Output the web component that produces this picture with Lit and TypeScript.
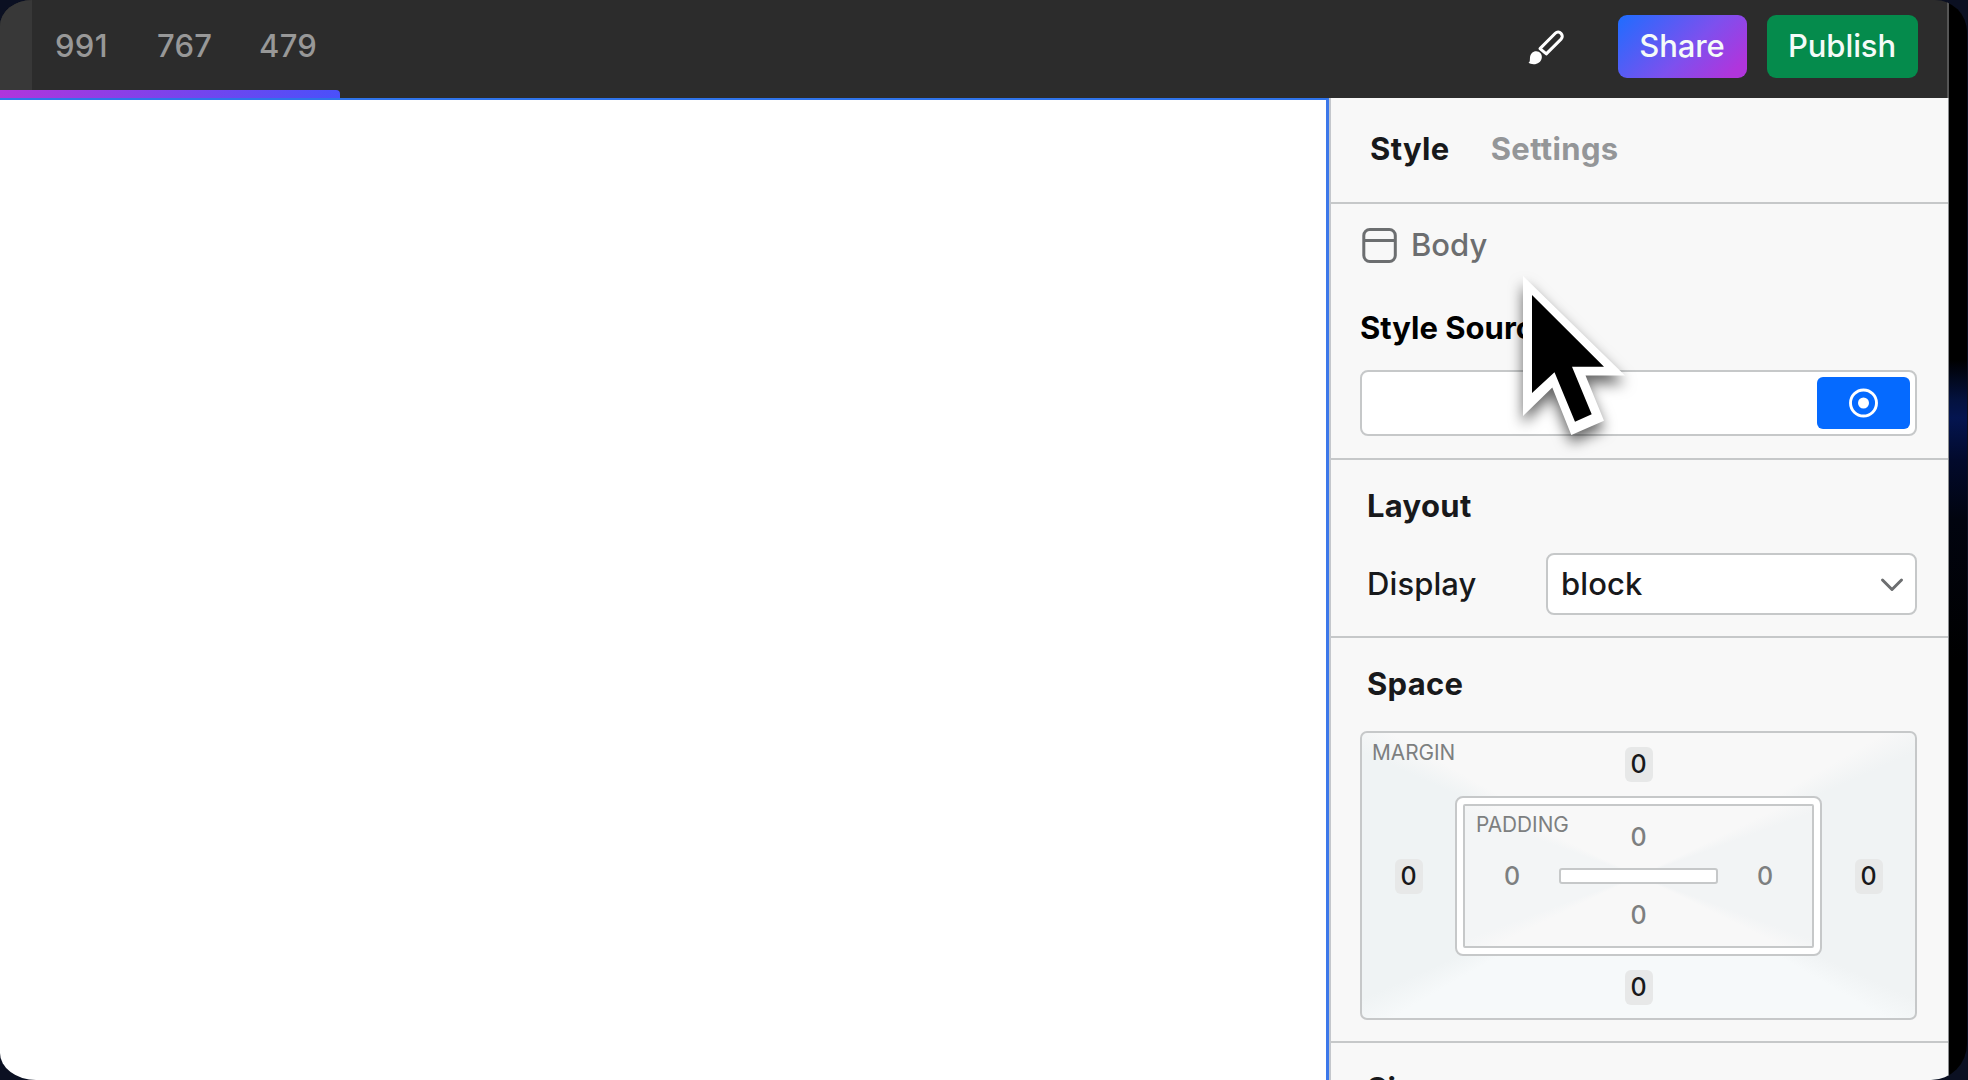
import { LitElement, html, svg, css } from "lit";
import { customElement } from "lit/decorators.js";

const brushIcon = svg`<svg class="brush" viewBox="0 0 40 40" width="40" height="40">
  <path d="M13 22.600 L28.300 7.300 C32 3.600 37.800 9.200 34.100 13.100 L19.300 27.900 Z" fill="none" stroke="#fff" stroke-width="3" stroke-linejoin="round"/>
  <path d="M9.200 25.300 C13 25.300 15.300 28.300 14.800 31.700 C14.200 36 10.500 38.300 6.500 38.200 C4.500 38.200 2.500 37.700 1.500 36.800 C3.300 35.800 2.700 34 3 31.500 C3.300 28 5.800 25.300 9.200 25.300Z" fill="#fff"/>
</svg>`;

@customElement("top-bar")
export class TopBar extends LitElement {
  static styles = css`
    :host { display: flex; height: 98px; box-sizing: border-box; background: #2c2c2c; border-right: 2px solid #555; color: #989898; position: relative; }
    .lead { width: 32px; background: #383838; }
    .sizes { display: flex; padding: 0 0 6px 23px; gap: 47px; align-items: center; font-weight: 500; letter-spacing: .3px; }
    .size { width: 55px; white-space: nowrap; }
    .fill { flex: 1; }
    .actions { display: flex; align-items: center; padding: 0 29px 6px 0; font-weight: 500; }
    .brush { display: block; margin-right: 51px; overflow: visible; }
    .btn { height: 63px; line-height: 61px; box-sizing: border-box; border-radius: 9px; color: #f4fbf8; text-align: center; letter-spacing: -.1px; }
    .share { width: 129px; background: linear-gradient(135deg, #1e6dff, #7d50ee 55%, #b035dc 90%); margin-right: 20px; text-indent: -1px; }
    .publish { width: 151px; background: #058b4c; text-indent: -1px; }
    .progress { position: absolute; left: 0; bottom: 0; width: 340px; height: 8px; border-radius: 0 4px 0 0; background: linear-gradient(90deg, #b035dc, #4a50fa); }
  `;
  render() {
    return html`
      <div class="lead"></div>
      <div class="sizes">${["991", "767", "479"].map((s) => html`<span class="size">${s}</span>`)}</div>
      <div class="fill"></div>
      <div class="actions">
        ${brushIcon}
        <div class="btn share">Share</div>
        <div class="btn publish">Publish</div>
      </div>
      <div class="progress"></div>`;
  }
}

@customElement("space-editor")
export class SpaceEditor extends LitElement {
  static styles = css`
    :host { display: block; width: 557px; height: 289px; font-size: 25px; }
    .box { box-sizing: border-box; border: 2px solid #c6c8c9; display: grid; height: 100%; position: relative; align-items: center; justify-items: center; }
    .margin { border-radius: 7px; grid-template: 63px 160px 1fr / 93px 367px 1fr; background: conic-gradient(from 0deg at 50% 50%, #f8f8f8 0 60deg, #f0f3f4 66deg 114deg, #f6f9fa 120deg 240deg, #eff3f4 246deg 294deg, #f8f8f8 300deg); }
    .frame { width: 367px; height: 160px; box-sizing: border-box; border: 2px solid #c6c8c9; border-radius: 8px; background: #fff; padding: 6px; }
    .padding { border-radius: 2px; grid-template: 62px 16px 1fr / 94px 159px 1fr; background: conic-gradient(from 0deg at 50% 50%, #f8f8f8 0 64deg, #f2f4f5 70deg 110deg, #f8f8f8 116deg 244deg, #f3f5f6 250deg 290deg, #f8f8f8 296deg); color: #7d7f80; font-weight: 500; }
    .label { position: absolute; font-size: 20.800px; line-height: 24px; font-weight: 400; color: #7d7f80; white-space: nowrap; }
    .margin > .label { left: 10px; top: 8px; }
    .padding > .label { left: 11px; top: 7px; }
    .chip { width: 28px; height: 35px; line-height: 35px; border-radius: 6px; background: #e7e8e8; color: #18191b; font-weight: 500; text-align: center; }
    .t { grid-area: 1 / 2; } .l { grid-area: 2 / 1; } .m { grid-area: 2 / 2; } .r { grid-area: 2 / 3; } .b { grid-area: 3 / 2; }
    .core { width: 159px; height: 16px; box-sizing: border-box; border: 2px solid #c6c8c9; border-radius: 3px; background: #fff; }
  `;
  render() {
    return html`<div class="box margin">
      <span class="label">MARGIN</span>
      <span class="chip t">0</span><span class="chip l">0</span>
      <div class="frame m"><div class="box padding">
        <span class="label">PADDING</span>
        <span class="t">0</span><span class="l">0</span><div class="core m"></div><span class="r">0</span><span class="b">0</span>
      </div></div>
      <span class="chip r">0</span><span class="chip b">0</span>
    </div>`;
  }
}

@customElement("style-panel")
export class StylePanel extends LitElement {
  static styles = css`
    :host { display: flex; flex-direction: column; box-sizing: border-box; width: 618px; background: #f8f8f8; color: #18191b; overflow: hidden; border-right: 1px solid #8c8e90; font-weight: 450; }
    section { box-sizing: border-box; border-bottom: 2px solid #c6c8c9; padding: 0 31px 0 29px; flex: none; }
    .tabs { height: 106px; display: flex; gap: 41px; align-items: center; font-weight: 700; padding: 0 0 2px 39px; letter-spacing: .35px; }
    .off { color: #949698; }
    .source { height: 256px; }
    .node { display: flex; align-items: center; gap: 14px; height: 83px; color: #6c6e70; padding-left: 2px; }
    .node span { margin-top: -2px; }
    .srctitle { font-weight: 700; color: #000; height: 83px; line-height: 81px; }
    .field { box-sizing: border-box; border: 2px solid #c6c8c9; border-radius: 8px; background: #fff; display: flex; align-items: center; }
    .input { height: 66px; justify-content: flex-end; padding-right: 5px; }
    .local { width: 93px; height: 52px; border-radius: 6px; background: #056aff; display: grid; place-items: center; }
    .title { font-weight: 700; padding-left: 7px; line-height: 40px; padding-top: 26px; letter-spacing: .3px; }
    .layout { height: 178px; }
    .row { display: flex; align-items: center; padding-left: 7px; justify-content: space-between; margin-top: 27px; letter-spacing: .1px; }
    .select { width: 371px; height: 62px; padding: 0 11px 0 13px; justify-content: space-between; }
    .space { height: 405px; }
    space-editor { margin-top: 27px; }
    .last { border: 0; }
    svg { display: block; }
  `;
  render() {
    return html`
      <section class="tabs"><span>Style</span><span class="off">Settings</span></section>
      <section class="source">
        <div class="node">
          <svg width="35" height="35" viewBox="0 0 35 35" fill="none" stroke="#6c6e70" stroke-width="3"><rect x="1.800" y="1.500" width="31.500" height="32" rx="6"/><path d="M2 12.500H33"/></svg>
          <span>Body</span>
        </div>
        <div class="srctitle">Style Sources</div>
        <div class="field input"><div class="local">
          <svg width="30" height="30" viewBox="0 0 30 30"><circle cx="14.500" cy="15" r="13" fill="none" stroke="#fff" stroke-width="2.900"/><circle cx="14.500" cy="15" r="5.500" fill="#fff"/></svg>
        </div></div>
      </section>
      <section class="layout">
        <div class="title">Layout</div>
        <div class="row"><span>Display</span><div class="field select"><span>block</span>
          <svg width="24" height="16" viewBox="0 0 24 16" fill="none" stroke="#6c6e70" stroke-width="3" stroke-linecap="round" stroke-linejoin="round"><path d="M2.500 4L12 13.500L21.500 4"/></svg>
        </div></div>
      </section>
      <section class="space"><div class="title">Space</div><space-editor></space-editor></section>
      <section class="last"><div class="title">Size</div></section>`;
  }
}

@customElement("app-root")
export class AppRoot extends LitElement {
  static styles = css`
    :host { display: block; width: 1968px; height: 1080px; overflow: hidden; position: relative; background: #0b1022; font: 400 31px/40px Inter, "Liberation Sans", sans-serif; }
    .frame { width: 1967px; height: 1080px; display: flex; border-radius: 32px 32px 36px 36px / 26px 32px 36px 27px; overflow: hidden; }
    .edge { flex: 1; background: linear-gradient(#000 0 360px, #04123f 400px, #041550 418px, #020a2c 460px, #01040f 520px, #000 660px); }
    .window { width: 1949px; height: 1080px; flex: none; display: flex; flex-direction: column; }
    .work { flex: 1; display: flex; min-height: 0; }
    .canvas { flex: 1; box-sizing: border-box; background: #fff; border-top: 2px solid #2f74ea; border-right: 3px solid #3c78ea; }
    .rule { width: 2px; background: #c4c7cc; }
    .cursor { position: absolute; left: 1500px; top: 260px; filter: drop-shadow(0 8px 7px rgba(0, 0, 0, .6)); }
  `;
  render() {
    return html`
      <div class="frame">
        <div class="window">
          <top-bar></top-bar>
          <div class="work"><div class="canvas"></div><div class="rule"></div><style-panel></style-panel></div>
        </div>
        <div class="edge"></div>
      </div>
      <svg class="cursor" width="150" height="190" viewBox="1500 260 150 190">
        <path fill="#fff" d="M1523 276L1625 375.500H1585.500L1604 420.700L1571.300 435L1552.300 387.500L1523 416Z"/>
        <path fill="#000" d="M1532 295L1604 366.700H1572L1591.700 414.300L1575 421.700L1554.500 372.300L1532 393Z"/>
      </svg>`;
  }
}
